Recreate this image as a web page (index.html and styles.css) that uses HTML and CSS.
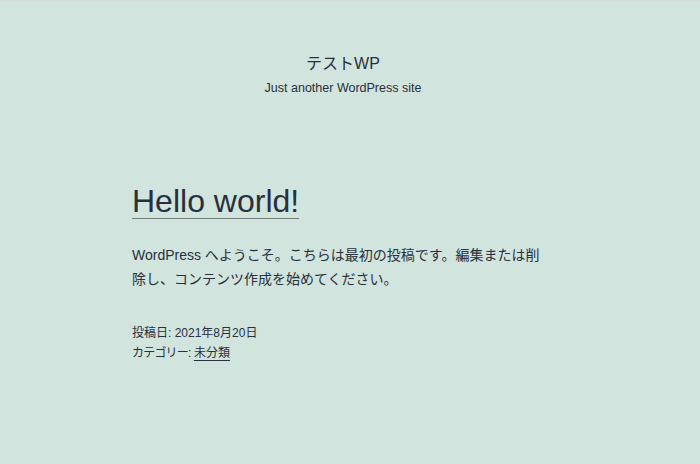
FILE: index.html
```html
<!DOCTYPE html>
<html lang="ja">
<head>
<meta charset="utf-8">
<title>テストWP</title>
<link rel="stylesheet" href="styles.css">
</head>
<body>
<header class="site-header">
  <p class="site-title">テストWP</p>
  <p class="site-description">Just another WordPress site</p>
</header>
<main class="site-main">
  <article class="post">
    <h2 class="entry-title"><a href="#">Hello world!</a></h2>
    <p class="entry-content">WordPress へようこそ。こちらは最初の投稿です。編集または削除し、コンテンツ作成を始めてください。</p>
    <footer class="entry-footer">
      <p class="meta">投稿日: 2021年8月20日</p>
      <p class="meta"><span class="meta-kana">カテゴリー:</span> <a href="#">未分類</a></p>
    </footer>
  </article>
</main>
</body>
</html>
```
FILE: styles.css
```css
html, body {
  margin: 0;
  padding: 0;
}
body {
  background: #d1e4dd;
  color: #28303d;
  font-family: "Liberation Sans", "Noto Sans CJK JP", sans-serif;
  width: 700px;
  height: 463px;
  overflow: hidden;
  border-top: 1px solid #d8dcda;
}
p, h2 {
  margin: 0;
}
a {
  color: inherit;
}
.site-header {
  padding-top: 51px;
  padding-right: 14px;
  text-align: center;
}
.site-title {
  font-size: 16px;
  line-height: 24px;
}
.site-description {
  margin-top: 2px;
  font-size: 12.5px;
  line-height: 20px;
}
.site-main {
  padding-top: 83px;
  padding-left: 132px;
}
.post {
  width: 416px;
}
.entry-title {
  font-size: 32px;
  line-height: 40px;
  font-weight: normal;
}
.entry-title a {
  text-decoration: underline;
  text-decoration-thickness: 1px;
  text-underline-offset: 6px;
  text-decoration-color: #6f7d7b;
}
.entry-content {
  margin-top: 22px;
  font-size: 14px;
  line-height: 24px;
}
.entry-footer {
  margin-top: 32px;
}
.meta {
  font-size: 12px;
  line-height: 20px;
}
.meta-kana {
  letter-spacing: -0.8px;
}
.meta a {
  text-decoration-thickness: 1px;
  text-underline-offset: 3px;
}
```
